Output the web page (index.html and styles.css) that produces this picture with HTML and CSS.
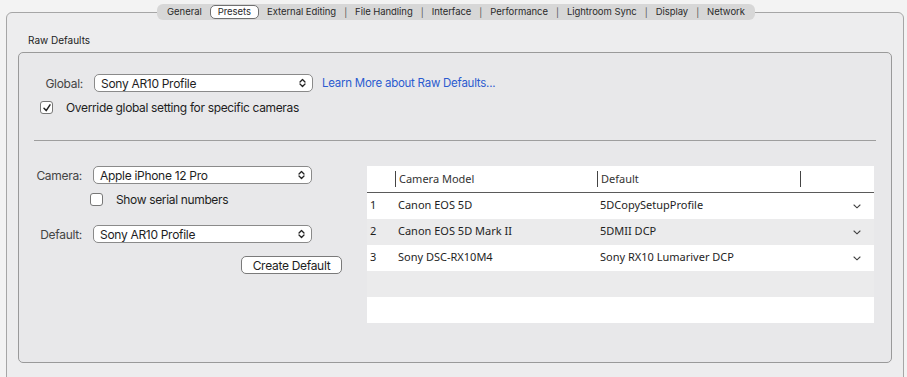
FILE: index.html
```html
<!DOCTYPE html>
<html lang="en">
<head>
    <meta charset="UTF-8">
    <meta name="viewport" content="width=device-width, initial-scale=1.0">
    <title>Preferences - Presets</title>
    <link rel="stylesheet" href="styles.css">
</head>
<body>
    <div class="prefs">
        <div class="tab-row">
            <div class="tabs">
                <span class="tab">General</span>
                <span class="tab active">Presets</span>
                <span class="tab">External Editing</span>
                <span class="sep">|</span>
                <span class="tab">File Handling</span>
                <span class="sep">|</span>
                <span class="tab">Interface</span>
                <span class="sep">|</span>
                <span class="tab">Performance</span>
                <span class="sep">|</span>
                <span class="tab">Lightroom Sync</span>
                <span class="sep">|</span>
                <span class="tab">Display</span>
                <span class="sep">|</span>
                <span class="tab">Network</span>
            </div>
        </div>

        <div class="frame">
            <div class="group-title">Raw Defaults</div>
            <div class="group">
                <div class="global-row">
                    <span class="label">Global:</span>
                    <div class="popup">
                        <span>Sony AR10 Profile</span>
                        <svg class="arrows" width="7" height="10" viewBox="0 0 7 10"><path d="M1 4 L3.5 1.5 L6 4 M1 6 L3.5 8.5 L6 6" fill="none" stroke="#222" stroke-width="1.3" stroke-linecap="round" stroke-linejoin="round"/></svg>
                    </div>
                    <a class="link" href="#">Learn More about Raw Defaults...</a>
                </div>
                <label class="check-row override">
                    <span class="checkbox checked">
                        <svg width="10" height="10" viewBox="0 0 10 10"><path d="M2 5.2 L4.2 7.6 L8 1.8" fill="none" stroke="#222" stroke-width="1.5" stroke-linecap="round" stroke-linejoin="round"/></svg>
                    </span>
                    Override global setting for specific cameras
                </label>

                <div class="divider"></div>

                <div class="cameras">
                    <div class="camera-form">
                        <div class="form-row">
                            <span class="label">Camera:</span>
                            <div class="popup">
                                <span>Apple iPhone 12 Pro</span>
                                <svg class="arrows" width="7" height="10" viewBox="0 0 7 10"><path d="M1 4 L3.5 1.5 L6 4 M1 6 L3.5 8.5 L6 6" fill="none" stroke="#222" stroke-width="1.3" stroke-linecap="round" stroke-linejoin="round"/></svg>
                            </div>
                        </div>
                        <label class="check-row serial">
                            <span class="checkbox"></span>
                            Show serial numbers
                        </label>
                        <div class="form-row default-row">
                            <span class="label">Default:</span>
                            <div class="popup">
                                <span>Sony AR10 Profile</span>
                                <svg class="arrows" width="7" height="10" viewBox="0 0 7 10"><path d="M1 4 L3.5 1.5 L6 4 M1 6 L3.5 8.5 L6 6" fill="none" stroke="#222" stroke-width="1.3" stroke-linecap="round" stroke-linejoin="round"/></svg>
                            </div>
                        </div>
                        <div class="button-row">
                            <button class="push">Create Default</button>
                        </div>
                    </div>

                    <div class="table">
                        <div class="thead">
                            <span class="cell num"></span>
                            <span class="cell model">Camera Model</span>
                            <span class="cell def">Default</span>
                            <span class="cell end"></span>
                        </div>
                        <div id="rows"></div>
                        <div class="trow alt"></div>
                        <div class="trow"></div>
                    </div>
                </div>
            </div>
        </div>
    </div>

    <script>
        const defaults = [
            { num: 1, model: "Canon EOS 5D", profile: "5DCopySetupProfile" },
            { num: 2, model: "Canon EOS 5D Mark II", profile: "5DMII DCP" },
            { num: 3, model: "Sony DSC-RX10M4", profile: "Sony RX10 Lumariver DCP" }
        ];

        const rows = document.getElementById('rows');
        defaults.forEach((item, i) => {
            const row = document.createElement('div');
            row.className = i % 2 ? 'trow alt' : 'trow';
            row.innerHTML = `
                <span class="cell num">${item.num}</span>
                <span class="cell model">${item.model}</span>
                <span class="cell def">${item.profile}</span>
                <span class="cell end">
                    <svg width="8" height="5" viewBox="0 0 8 5"><path d="M1 1 L4 3.8 L7 1" fill="none" stroke="#444" stroke-width="1.1" stroke-linecap="round"/></svg>
                </span>
            `;
            rows.appendChild(row);
        });
    </script>
</body>
</html>
```

FILE: styles.css
```css
* {
    margin: 0;
    padding: 0;
    box-sizing: border-box;
}

body {
    background-color: #f3f3f3;
    font-family: Inter, "Noto Sans", sans-serif;
    color: #222;
    overflow: hidden;
}

.prefs {
    height: 377px;
    overflow: hidden;
    padding: 4px 3px 0 6px;
}

/* tab strip sits on top of the frame border */
.tab-row {
    display: flex;
    justify-content: center;
    position: relative;
    z-index: 1;
    padding-left: 2px;
}

.tabs {
    display: flex;
    align-items: center;
    gap: 8px;
    height: 16px;
    padding: 0 10px;
    background-color: #d7d7d7;
    border-radius: 6px;
    font-size: 9.5px;
    letter-spacing: -0.05px;
    color: #2a2a2a;
}

.tab {
    line-height: 14px;
}

.tab.active {
    background-color: #fff;
    border: 1px solid #707070;
    border-radius: 5px;
    padding: 0 7px;
    height: 14px;
    line-height: 12px;
}

.sep {
    color: #555;
    font-size: 9px;
}

.frame {
    margin-top: -8px;
    border: 1px solid #a6a6a6;
    border-radius: 6px;
    background-color: #ededee;
    padding: 21px 11px 0 11px;
    height: 372px;
}

.group-title {
    font-size: 10px;
    color: #222;
    padding-left: 10px;
    height: 18px;
}

.group {
    border: 1px solid #9a9a9a;
    border-radius: 5px;
    background-color: #e8e8ea;
    height: 311px;
    padding: 21px 15px 0 15px;
}

.global-row,
.form-row {
    display: flex;
    align-items: center;
    height: 18px;
}

.label {
    width: 49px;
    text-align: right;
    margin-right: 11px;
    font-size: 12px;
    letter-spacing: -0.3px;
    color: #444;
}

.popup {
    display: flex;
    align-items: center;
    justify-content: space-between;
    width: 219px;
    height: 18px;
    padding: 0 6px 0 6px;
    background-color: #fff;
    border: 1px solid #8a8a8a;
    border-radius: 5px;
    font-size: 12px;
    letter-spacing: -0.3px;
    color: #1e1e1e;
}

.link {
    margin-left: 9px;
    font-size: 11.5px;
    letter-spacing: -0.25px;
    color: #2b5bd0;
    text-decoration: none;
}

.check-row {
    display: flex;
    align-items: center;
    gap: 13px;
    font-size: 12px;
    letter-spacing: -0.35px;
    color: #1e1e1e;
}

.override {
    margin: 8px 0 0 6px;
}

.checkbox {
    display: flex;
    align-items: center;
    justify-content: center;
    width: 13px;
    height: 13px;
    background-color: #fff;
    border: 1px solid #777;
    border-radius: 3px;
}

.divider {
    margin-top: 25px;
    border-top: 1px solid #9e9e9e;
}

.cameras {
    display: flex;
    gap: 25px;
    margin-top: 25px;
}

.camera-form {
    display: flex;
    flex-direction: column;
    width: 308px;
}

.camera-form .label {
    width: 48px;
}

.serial {
    margin: 8px 0 0 56px;
}

.default-row {
    margin-top: 18px;
}

.button-row {
    display: flex;
    justify-content: flex-end;
    margin-top: 13px;
}

.push {
    width: 101px;
    height: 18px;
    background-color: #fff;
    border: 1px solid #7a7a7a;
    border-radius: 5px;
    font-family: Inter, "Noto Sans", sans-serif;
    font-size: 12px;
    letter-spacing: -0.3px;
    color: #1e1e1e;
}

.table {
    width: 507px;
    font-family: "Noto Sans", sans-serif;
    font-size: 11px;
    color: #1e1e1e;
}

.thead,
.trow {
    display: flex;
    align-items: center;
}

.thead {
    height: 27px;
    background-color: #fff;
    border-bottom: 1px solid #5a5a5a;
    color: #333;
}

.thead .cell {
    border-left: 1px solid #444;
    height: 16px;
    line-height: 16px;
}

.thead .num {
    border-left: none;
}

.trow {
    height: 26px;
    padding-bottom: 4px;
    background-color: #fff;
}

.trow.alt {
    background-color: #ebebec;
}

.cell {
    padding-left: 3px;
}

.num {
    width: 28px;
}

.model {
    width: 202px;
}

.def {
    width: 203px;
}

.end {
    flex: 1;
    display: flex;
    justify-content: flex-end;
    padding-right: 13px;
    padding-top: 4px;
}
```
